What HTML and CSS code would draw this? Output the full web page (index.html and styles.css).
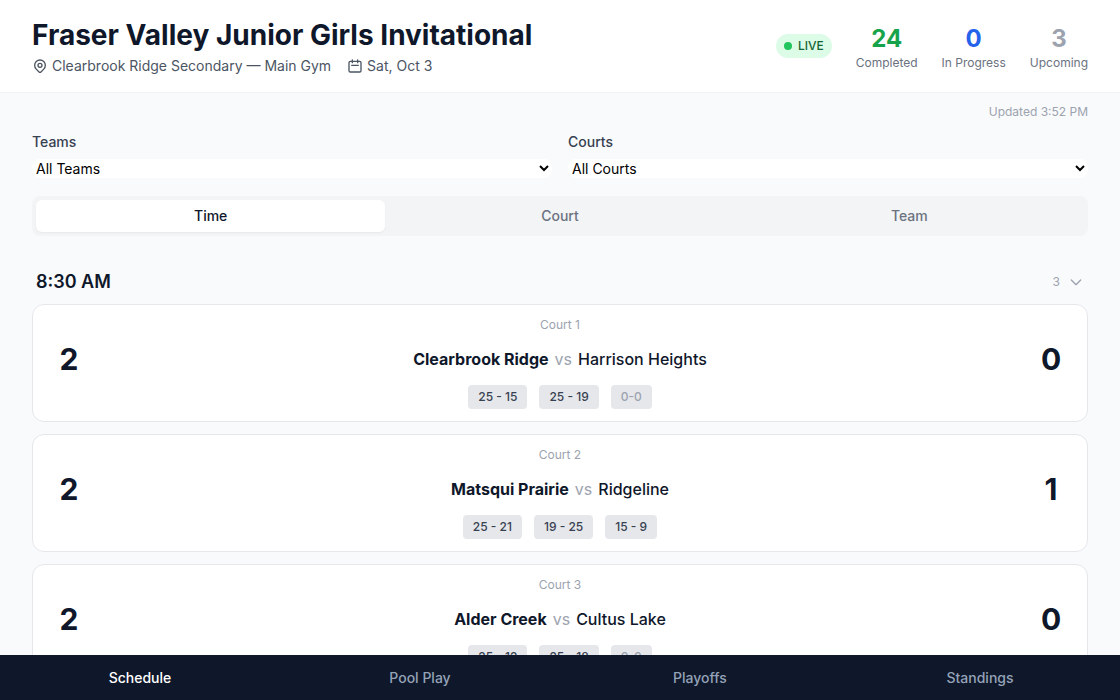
FILE: index.html
```html
<!DOCTYPE html>
<html lang="en">
<head>
    <meta charset="UTF-8">
    <meta name="viewport" content="width=device-width, initial-scale=1.0">
    <title>Fraser Valley Junior Girls Invitational</title>
    <link rel="stylesheet" href="styles.css">
</head>
<body>
    <header class="header">
        <div>
            <h1 class="title">Fraser Valley Junior Girls Invitational</h1>
            <div class="meta">
                <span class="meta-item">
                    <svg class="icon" viewBox="0 0 24 24" aria-hidden="true">
                        <path d="M17.657 16.657L13.414 20.9a2 2 0 0 1-2.827 0l-4.244-4.243a8 8 0 1 1 11.314 0z"/>
                        <path d="M15 11a3 3 0 1 1-6 0 3 3 0 0 1 6 0z"/>
                    </svg>
                    Clearbrook Ridge Secondary — Main Gym
                </span>
                <span class="meta-item">
                    <svg class="icon" viewBox="0 0 24 24" aria-hidden="true">
                        <path d="M8 7V3m8 4V3m-9 8h10M5 21h14a2 2 0 0 0 2-2V7a2 2 0 0 0-2-2H5a2 2 0 0 0-2 2v12a2 2 0 0 0 2 2z"/>
                    </svg>
                    Sat, Oct 3
                </span>
            </div>
        </div>
        <div class="stats">
            <span class="live"><span class="live-dot"></span>LIVE</span>
            <div class="stat">
                <div class="stat-value completed">24</div>
                <div class="stat-label">Completed</div>
            </div>
            <div class="stat">
                <div class="stat-value progress">0</div>
                <div class="stat-label">In Progress</div>
            </div>
            <div class="stat">
                <div class="stat-value upcoming">3</div>
                <div class="stat-label">Upcoming</div>
            </div>
        </div>
    </header>

    <main class="main">
        <p class="updated">Updated 3:52 PM</p>

        <div class="filters">
            <div class="filter">
                <label for="teams">Teams</label>
                <select id="teams">
                    <option>All Teams</option>
                    <option>Alder Creek</option>
                    <option>Clearbrook Ridge</option>
                    <option>Cultus Lake</option>
                    <option>Harrison Heights</option>
                    <option>Matsqui Prairie</option>
                    <option>Ridgeline</option>
                </select>
            </div>
            <div class="filter">
                <label for="courts">Courts</label>
                <select id="courts">
                    <option>All Courts</option>
                    <option>Court 1</option>
                    <option>Court 2</option>
                    <option>Court 3</option>
                </select>
            </div>
        </div>

        <div class="tabs">
            <button type="button" class="tab active">Time</button>
            <button type="button" class="tab">Court</button>
            <button type="button" class="tab">Team</button>
        </div>

        <section>
            <button type="button" class="slot-header">
                <span class="slot-time">8:30 AM</span>
                <span class="slot-count">
                    3
                    <svg class="icon" viewBox="0 0 24 24" aria-hidden="true">
                        <path d="M19 9l-7 7-7-7"/>
                    </svg>
                </span>
            </button>

            <div class="matches">
                <article class="match">
                    <div class="court">Court 1</div>
                    <div class="match-row">
                        <span class="score">2</span>
                        <span class="teams"><strong>Clearbrook Ridge</strong><span class="vs">vs</span>Harrison Heights</span>
                        <span class="score">0</span>
                    </div>
                    <div class="sets">
                        <span class="set">25 - 15</span>
                        <span class="set">25 - 19</span>
                        <span class="set unplayed">0-0</span>
                    </div>
                </article>

                <article class="match">
                    <div class="court">Court 2</div>
                    <div class="match-row">
                        <span class="score">2</span>
                        <span class="teams"><strong>Matsqui Prairie</strong><span class="vs">vs</span>Ridgeline</span>
                        <span class="score">1</span>
                    </div>
                    <div class="sets">
                        <span class="set">25 - 21</span>
                        <span class="set">19 - 25</span>
                        <span class="set">15 - 9</span>
                    </div>
                </article>

                <article class="match">
                    <div class="court">Court 3</div>
                    <div class="match-row">
                        <span class="score">2</span>
                        <span class="teams"><strong>Alder Creek</strong><span class="vs">vs</span>Cultus Lake</span>
                        <span class="score">0</span>
                    </div>
                    <div class="sets">
                        <span class="set">25 - 12</span>
                        <span class="set">25 - 18</span>
                        <span class="set unplayed">0-0</span>
                    </div>
                </article>
            </div>
        </section>
    </main>

    <nav class="bottom-nav">
        <a href="#schedule" class="active">Schedule</a>
        <a href="#pool-play">Pool Play</a>
        <a href="#playoffs">Playoffs</a>
        <a href="#standings">Standings</a>
    </nav>
</body>
</html>
```

FILE: styles.css
```css
* {
    box-sizing: border-box;
}
body {
    margin: 0;
    background-color: #f9fafc;
    color: #0f172a;
    font-family: Inter, sans-serif;
    font-size: 14px;
    line-height: 20px;
}
button, select {
    font: inherit;
}
.icon {
    width: 16px;
    height: 16px;
    fill: none;
    stroke: currentColor;
    stroke-width: 2;
    stroke-linecap: round;
    stroke-linejoin: round;
}

/* Header */
.header {
    display: flex;
    justify-content: space-between;
    align-items: center;
    padding: 16px 32px;
    background-color: #fff;
    border-bottom: 1px solid #eff1f4;
}
.title {
    margin: 0 0 2px;
    font-size: 28px;
    line-height: 38px;
    font-weight: 700;
}
.meta {
    display: flex;
    gap: 16px;
    color: #4b5563;
}
.meta-item {
    display: flex;
    align-items: center;
    gap: 4px;
}
.stats {
    display: flex;
    align-items: center;
    gap: 24px;
}
.live {
    display: flex;
    align-items: center;
    gap: 6px;
    padding: 4px 8px;
    border-radius: 12px;
    background-color: #dcfce7;
    color: #166534;
    font-size: 12px;
    line-height: 16px;
    font-weight: 500;
}
.live-dot {
    width: 8px;
    height: 8px;
    border-radius: 50%;
    background-color: #22c55e;
}
.stat {
    padding-top: 2px;
    text-align: center;
}
.stat-value {
    font-size: 24px;
    line-height: 32px;
    font-weight: 700;
}
.stat-label {
    color: #6b7280;
    font-size: 12px;
    line-height: 16px;
}
.completed {
    color: #16a34a;
}
.progress {
    color: #2563eb;
}
.upcoming {
    color: #9ca3af;
}

/* Filters and view tabs */
.main {
    padding: 11px 32px 64px;
}
.updated {
    margin: 0 0 12px;
    color: #9ca3af;
    font-size: 12px;
    line-height: 16px;
    text-align: right;
}
.filters {
    display: grid;
    grid-template-columns: 1fr 1fr;
    gap: 16px;
    margin-bottom: 18px;
}
.filter label {
    display: block;
    margin-bottom: 7px;
    color: #374151;
    font-weight: 500;
}
.filter select {
    display: block;
    width: 100%;
    border: 0;
    border-radius: 8px;
    background-color: #fff;
    color: #000;
}
.tabs {
    display: flex;
    padding: 4px;
    border-radius: 8px;
    background-color: #f3f4f6;
}
.tab {
    flex: 1;
    padding: 6px 12px;
    border: 0;
    border-radius: 6px;
    background: none;
    color: #6b7280;
    font-weight: 500;
}
.tab.active {
    background-color: #fff;
    color: #0f172a;
    box-shadow: 0 1px 2px rgba(0, 0, 0, 0.05);
}

/* Time slots */
.slot-header {
    display: flex;
    justify-content: space-between;
    align-items: center;
    width: 100%;
    margin-top: 24px;
    padding: 8px 4px;
    border: 0;
    background: none;
    color: #0f172a;
}
.slot-time {
    font-size: 18px;
    line-height: 28px;
    font-weight: 600;
}
.slot-count {
    display: flex;
    align-items: center;
    gap: 8px;
    color: #9ca3af;
    font-size: 12px;
}
.matches {
    display: flex;
    flex-direction: column;
    gap: 12px;
}
.match {
    padding: 12px 16px;
    border: 1px solid #e5e7eb;
    border-radius: 12px;
    background-color: #fff;
}
.court {
    color: #9ca3af;
    font-size: 12px;
    line-height: 16px;
    text-align: center;
}
.match-row {
    display: flex;
    justify-content: space-between;
    align-items: center;
    margin: 8px 0;
}
.score {
    width: 40px;
    font-size: 30px;
    line-height: 36px;
    font-weight: 700;
    text-align: center;
}
.teams {
    font-size: 16px;
    line-height: 24px;
    font-weight: 500;
}
.teams strong {
    font-weight: 700;
}
.vs {
    margin: 0 6px;
    color: #9ca3af;
    font-weight: 400;
}
.sets {
    display: flex;
    justify-content: center;
    gap: 12px;
}
.set {
    padding: 4px 10px;
    border-radius: 4px;
    background-color: #e5e7eb;
    color: #374151;
    font-size: 12px;
    line-height: 16px;
    font-weight: 500;
}
.set.unplayed {
    color: #9ca3af;
}

/* Bottom navigation */
.bottom-nav {
    position: fixed;
    right: 0;
    bottom: 0;
    left: 0;
    display: flex;
    background-color: #0f172a;
}
.bottom-nav a {
    flex: 1;
    padding: 13px 0 12px;
    color: #94a3b8;
    font-weight: 500;
    text-align: center;
    text-decoration: none;
}
.bottom-nav a.active {
    color: #fff;
}
```
